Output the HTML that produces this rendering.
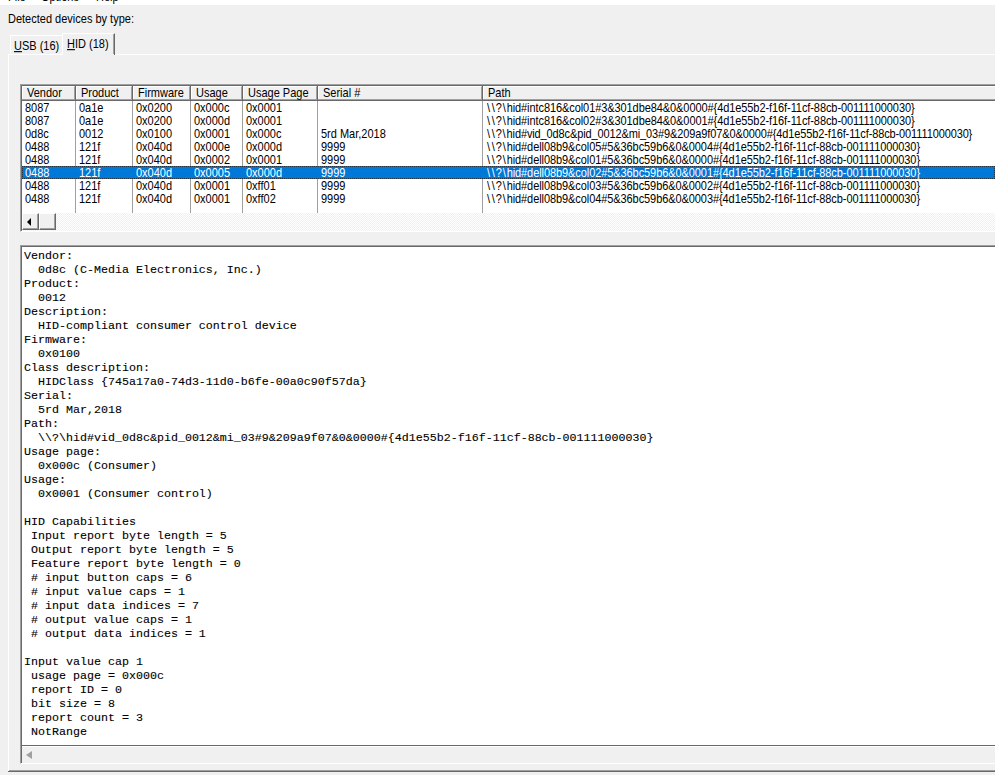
<!DOCTYPE html>
<html><head><meta charset="utf-8"><style>
*{margin:0;padding:0;box-sizing:border-box}
html,body{width:995px;height:775px;overflow:hidden;background:#f0f0f0}
body{position:relative;font-family:"Liberation Sans",sans-serif;font-size:11px;color:#000}
.a{position:absolute}
.t{position:absolute;white-space:pre;line-height:13px;transform:scaleY(1.12);transform-origin:0 10.3px}
.mono{font-family:"Liberation Mono",monospace;font-size:11.667px;line-height:14px;white-space:pre;-webkit-text-stroke:0.1px #000}
.r{border-top:1px solid #fff;border-left:1px solid #fff;border-right:1px solid #696969;border-bottom:1px solid #696969;background:#f0f0f0;box-shadow:inset -1px -1px 0 #a0a0a0}
</style></head><body>
<div class="a" style="left:0;top:0;width:995px;height:5px;background:#fff;overflow:hidden"><span class="t" style="left:8px;top:-9px">File</span><span class="t" style="left:41px;top:-9px">Options</span><span class="t" style="left:96px;top:-9px">Help</span></div>
<span class="t" style="left:8px;top:13px">Detected devices by type:</span>
<div class="a" style="left:8px;top:54px;width:987px;height:1px;background:#fff"></div>
<div class="a" style="left:8px;top:54px;width:1px;height:717px;background:#fff"></div>
<div class="a" style="left:8px;top:771px;width:987px;height:1px;background:#696969"></div>
<div class="a" style="left:9px;top:770px;width:986px;height:1px;background:#a0a0a0"></div>
<div class="a" style="left:10px;top:35px;width:52px;height:19px;border-top:1px solid #fff;border-left:1px solid #fff"></div>
<span class="t" style="left:14px;top:40px"><u>U</u>SB (16)</span>
<div class="a" style="left:62px;top:33px;width:53px;height:22px;background:#f0f0f0;border-top:1px solid #fff;border-left:1px solid #fff;border-right:1px solid #696969"></div>
<div class="a" style="left:113px;top:34px;width:1px;height:20px;background:#a0a0a0"></div>
<span class="t" style="left:67px;top:38px"><u>H</u>ID (18)</span>
<div class="a" style="left:20px;top:84px;width:975px;height:148px;background:#fff;border-top:1px solid #a0a0a0;border-left:1px solid #a0a0a0;border-bottom:1px solid #fff"></div>
<div class="a" style="left:21px;top:85px;width:974px;height:146px;border-top:1px solid #696969;border-left:1px solid #696969"></div>
<div class="a" style="left:22px;top:86px;width:973px;height:15px;background:#f0f0f0;border-bottom:1px solid #696969"></div>
<div class="a" style="left:22px;top:99px;width:973px;height:1px;background:#a0a0a0"></div>
<div class="a" style="left:22px;top:86px;width:53px;height:13px;border-top:1px solid #fff;border-left:1px solid #fff;border-right:1px solid #a0a0a0"></div>
<div class="a" style="left:75px;top:86px;width:1px;height:15px;background:#696969"></div>
<span class="t" style="left:27px;top:87px">Vendor</span>
<div class="a" style="left:76px;top:86px;width:56px;height:13px;border-top:1px solid #fff;border-left:1px solid #fff;border-right:1px solid #a0a0a0"></div>
<div class="a" style="left:132px;top:86px;width:1px;height:15px;background:#696969"></div>
<span class="t" style="left:81px;top:87px">Product</span>
<div class="a" style="left:133px;top:86px;width:57px;height:13px;border-top:1px solid #fff;border-left:1px solid #fff;border-right:1px solid #a0a0a0"></div>
<div class="a" style="left:190px;top:86px;width:1px;height:15px;background:#696969"></div>
<span class="t" style="left:138px;top:87px">Firmware</span>
<div class="a" style="left:191px;top:86px;width:51px;height:13px;border-top:1px solid #fff;border-left:1px solid #fff;border-right:1px solid #a0a0a0"></div>
<div class="a" style="left:242px;top:86px;width:1px;height:15px;background:#696969"></div>
<span class="t" style="left:196px;top:87px">Usage</span>
<div class="a" style="left:243px;top:86px;width:74px;height:13px;border-top:1px solid #fff;border-left:1px solid #fff;border-right:1px solid #a0a0a0"></div>
<div class="a" style="left:317px;top:86px;width:1px;height:15px;background:#696969"></div>
<span class="t" style="left:248px;top:87px">Usage Page</span>
<div class="a" style="left:318px;top:86px;width:164px;height:13px;border-top:1px solid #fff;border-left:1px solid #fff;border-right:1px solid #a0a0a0"></div>
<div class="a" style="left:482px;top:86px;width:1px;height:15px;background:#696969"></div>
<span class="t" style="left:323px;top:87px">Serial #</span>
<div class="a" style="left:483px;top:86px;width:617px;height:13px;border-top:1px solid #fff;border-left:1px solid #fff;border-right:1px solid #a0a0a0"></div>
<span class="t" style="left:488px;top:87px">Path</span>
<div class="a" style="left:75px;top:101px;width:1px;height:112px;background:#a0a0a0"></div>
<div class="a" style="left:132px;top:101px;width:1px;height:112px;background:#a0a0a0"></div>
<div class="a" style="left:190px;top:101px;width:1px;height:112px;background:#a0a0a0"></div>
<div class="a" style="left:242px;top:101px;width:1px;height:112px;background:#a0a0a0"></div>
<div class="a" style="left:317px;top:101px;width:1px;height:112px;background:#a0a0a0"></div>
<div class="a" style="left:482px;top:101px;width:1px;height:112px;background:#a0a0a0"></div>
<span class="t" style="left:25px;top:102px;color:#000">8087</span>
<span class="t" style="left:79px;top:102px;color:#000">0a1e</span>
<span class="t" style="left:136px;top:102px;color:#000">0x0200</span>
<span class="t" style="left:194px;top:102px;color:#000">0x000c</span>
<span class="t" style="left:246px;top:102px;color:#000">0x0001</span>
<span class="t" style="left:486px;top:102px;color:#000;letter-spacing:-0.08px"><span style="padding-left:0.9px;letter-spacing:0.9px">\</span><span style="padding-left:0.9px;letter-spacing:0.9px">\</span>?<span style="padding-left:0.9px;letter-spacing:0.9px">\</span>hid#intc816&amp;col01#3&amp;301dbe84&amp;0&amp;0000#{4d1e55b2-f16f-11cf-88cb-001111000030}</span>
<span class="t" style="left:25px;top:115px;color:#000">8087</span>
<span class="t" style="left:79px;top:115px;color:#000">0a1e</span>
<span class="t" style="left:136px;top:115px;color:#000">0x0200</span>
<span class="t" style="left:194px;top:115px;color:#000">0x000d</span>
<span class="t" style="left:246px;top:115px;color:#000">0x0001</span>
<span class="t" style="left:486px;top:115px;color:#000;letter-spacing:-0.08px"><span style="padding-left:0.9px;letter-spacing:0.9px">\</span><span style="padding-left:0.9px;letter-spacing:0.9px">\</span>?<span style="padding-left:0.9px;letter-spacing:0.9px">\</span>hid#intc816&amp;col02#3&amp;301dbe84&amp;0&amp;0001#{4d1e55b2-f16f-11cf-88cb-001111000030}</span>
<span class="t" style="left:25px;top:128px;color:#000">0d8c</span>
<span class="t" style="left:79px;top:128px;color:#000">0012</span>
<span class="t" style="left:136px;top:128px;color:#000">0x0100</span>
<span class="t" style="left:194px;top:128px;color:#000">0x0001</span>
<span class="t" style="left:246px;top:128px;color:#000">0x000c</span>
<span class="t" style="left:321px;top:128px;color:#000">5rd Mar,2018</span>
<span class="t" style="left:486px;top:128px;color:#000;letter-spacing:-0.12px"><span style="padding-left:0.9px;letter-spacing:0.9px">\</span><span style="padding-left:0.9px;letter-spacing:0.9px">\</span>?<span style="padding-left:0.9px;letter-spacing:0.9px">\</span>hid#vid<span style="position:relative;top:-1px">_</span>0d8c&amp;pid<span style="position:relative;top:-1px">_</span>0012&amp;mi<span style="position:relative;top:-1px">_</span>03#9&amp;209a9f07&amp;0&amp;0000#{4d1e55b2-f16f-11cf-88cb-001111000030}</span>
<span class="t" style="left:25px;top:141px;color:#000">0488</span>
<span class="t" style="left:79px;top:141px;color:#000">121f</span>
<span class="t" style="left:136px;top:141px;color:#000">0x040d</span>
<span class="t" style="left:194px;top:141px;color:#000">0x000e</span>
<span class="t" style="left:246px;top:141px;color:#000">0x000d</span>
<span class="t" style="left:321px;top:141px;color:#000">9999</span>
<span class="t" style="left:486px;top:141px;color:#000;letter-spacing:-0.08px"><span style="padding-left:0.9px;letter-spacing:0.9px">\</span><span style="padding-left:0.9px;letter-spacing:0.9px">\</span>?<span style="padding-left:0.9px;letter-spacing:0.9px">\</span>hid#dell08b9&amp;col05#5&amp;36bc59b6&amp;0&amp;0004#{4d1e55b2-f16f-11cf-88cb-001111000030}</span>
<span class="t" style="left:25px;top:154px;color:#000">0488</span>
<span class="t" style="left:79px;top:154px;color:#000">121f</span>
<span class="t" style="left:136px;top:154px;color:#000">0x040d</span>
<span class="t" style="left:194px;top:154px;color:#000">0x0002</span>
<span class="t" style="left:246px;top:154px;color:#000">0x0001</span>
<span class="t" style="left:321px;top:154px;color:#000">9999</span>
<span class="t" style="left:486px;top:154px;color:#000;letter-spacing:-0.08px"><span style="padding-left:0.9px;letter-spacing:0.9px">\</span><span style="padding-left:0.9px;letter-spacing:0.9px">\</span>?<span style="padding-left:0.9px;letter-spacing:0.9px">\</span>hid#dell08b9&amp;col01#5&amp;36bc59b6&amp;0&amp;0000#{4d1e55b2-f16f-11cf-88cb-001111000030}</span>
<div class="a" style="left:22px;top:166px;width:973px;height:13px;background:#0078d7;outline:1px dotted #223344;outline-offset:-1px"></div>
<span class="t" style="left:25px;top:167px;color:#fff">0488</span>
<span class="t" style="left:79px;top:167px;color:#fff">121f</span>
<span class="t" style="left:136px;top:167px;color:#fff">0x040d</span>
<span class="t" style="left:194px;top:167px;color:#fff">0x0005</span>
<span class="t" style="left:246px;top:167px;color:#fff">0x000d</span>
<span class="t" style="left:321px;top:167px;color:#fff">9999</span>
<span class="t" style="left:486px;top:167px;color:#fff;letter-spacing:-0.08px"><span style="padding-left:0.9px;letter-spacing:0.9px">\</span><span style="padding-left:0.9px;letter-spacing:0.9px">\</span>?<span style="padding-left:0.9px;letter-spacing:0.9px">\</span>hid#dell08b9&amp;col02#5&amp;36bc59b6&amp;0&amp;0001#{4d1e55b2-f16f-11cf-88cb-001111000030}</span>
<span class="t" style="left:25px;top:180px;color:#000">0488</span>
<span class="t" style="left:79px;top:180px;color:#000">121f</span>
<span class="t" style="left:136px;top:180px;color:#000">0x040d</span>
<span class="t" style="left:194px;top:180px;color:#000">0x0001</span>
<span class="t" style="left:246px;top:180px;color:#000">0xff01</span>
<span class="t" style="left:321px;top:180px;color:#000">9999</span>
<span class="t" style="left:486px;top:180px;color:#000;letter-spacing:-0.08px"><span style="padding-left:0.9px;letter-spacing:0.9px">\</span><span style="padding-left:0.9px;letter-spacing:0.9px">\</span>?<span style="padding-left:0.9px;letter-spacing:0.9px">\</span>hid#dell08b9&amp;col03#5&amp;36bc59b6&amp;0&amp;0002#{4d1e55b2-f16f-11cf-88cb-001111000030}</span>
<span class="t" style="left:25px;top:193px;color:#000">0488</span>
<span class="t" style="left:79px;top:193px;color:#000">121f</span>
<span class="t" style="left:136px;top:193px;color:#000">0x040d</span>
<span class="t" style="left:194px;top:193px;color:#000">0x0001</span>
<span class="t" style="left:246px;top:193px;color:#000">0xff02</span>
<span class="t" style="left:321px;top:193px;color:#000">9999</span>
<span class="t" style="left:486px;top:193px;color:#000;letter-spacing:-0.08px"><span style="padding-left:0.9px;letter-spacing:0.9px">\</span><span style="padding-left:0.9px;letter-spacing:0.9px">\</span>?<span style="padding-left:0.9px;letter-spacing:0.9px">\</span>hid#dell08b9&amp;col04#5&amp;36bc59b6&amp;0&amp;0003#{4d1e55b2-f16f-11cf-88cb-001111000030}</span>
<div class="a" style="left:22px;top:213px;width:973px;height:18px;background-color:#f0f0f0;background-image:repeating-conic-gradient(#fff 0 25%, #f0f0f0 0 50%);background-size:2px 2px"></div>
<div class="a r" style="left:22px;top:213px;width:17px;height:17px"></div>
<div class="a" style="left:27px;top:218px;width:0;height:0;border-top:4px solid transparent;border-bottom:4px solid transparent;border-right:4px solid #000"></div>
<div class="a r" style="left:39px;top:213px;width:17px;height:17px"></div>
<div class="a" style="left:20px;top:245px;width:975px;height:519px;background:#fff;border-top:1px solid #a0a0a0;border-left:1px solid #a0a0a0;border-bottom:1px solid #fff"></div>
<div class="a" style="left:21px;top:246px;width:974px;height:517px;border-top:1px solid #696969;border-left:1px solid #696969"></div>
<div class="a mono" style="left:24px;top:249px">Vendor:
  0d8c (C-Media Electronics, Inc.)
Product:
  0012
Description:
  HID-compliant consumer control device
Firmware:
  0x0100
Class description:
  HIDClass {745a17a0-74d3-11d0-b6fe-00a0c90f57da}
Serial:
  5rd Mar,2018
Path:
  \\?\hid#vid_0d8c&amp;pid_0012&amp;mi_03#9&amp;209a9f07&amp;0&amp;0000#{4d1e55b2-f16f-11cf-88cb-001111000030}
Usage page:
  0x000c (Consumer)
Usage:
  0x0001 (Consumer control)

HID Capabilities
 Input report byte length = 5
 Output report byte length = 5
 Feature report byte length = 0
 # input button caps = 6
 # input value caps = 1
 # input data indices = 7
 # output value caps = 1
 # output data indices = 1

Input value cap 1
 usage page = 0x000c
 report ID = 0
 bit size = 8
 report count = 3
 NotRange</div>
<div class="a" style="left:22px;top:745px;width:973px;height:1px;background:#696969"></div>
<div class="a" style="left:22px;top:746px;width:973px;height:17px;background:#f0f0f0;border-top:1px solid #fff"></div>
<div class="a" style="left:26px;top:751px;width:0;height:0;border-top:4px solid transparent;border-bottom:4px solid transparent;border-right:6px solid #a0a0a0"></div>
</body></html>
